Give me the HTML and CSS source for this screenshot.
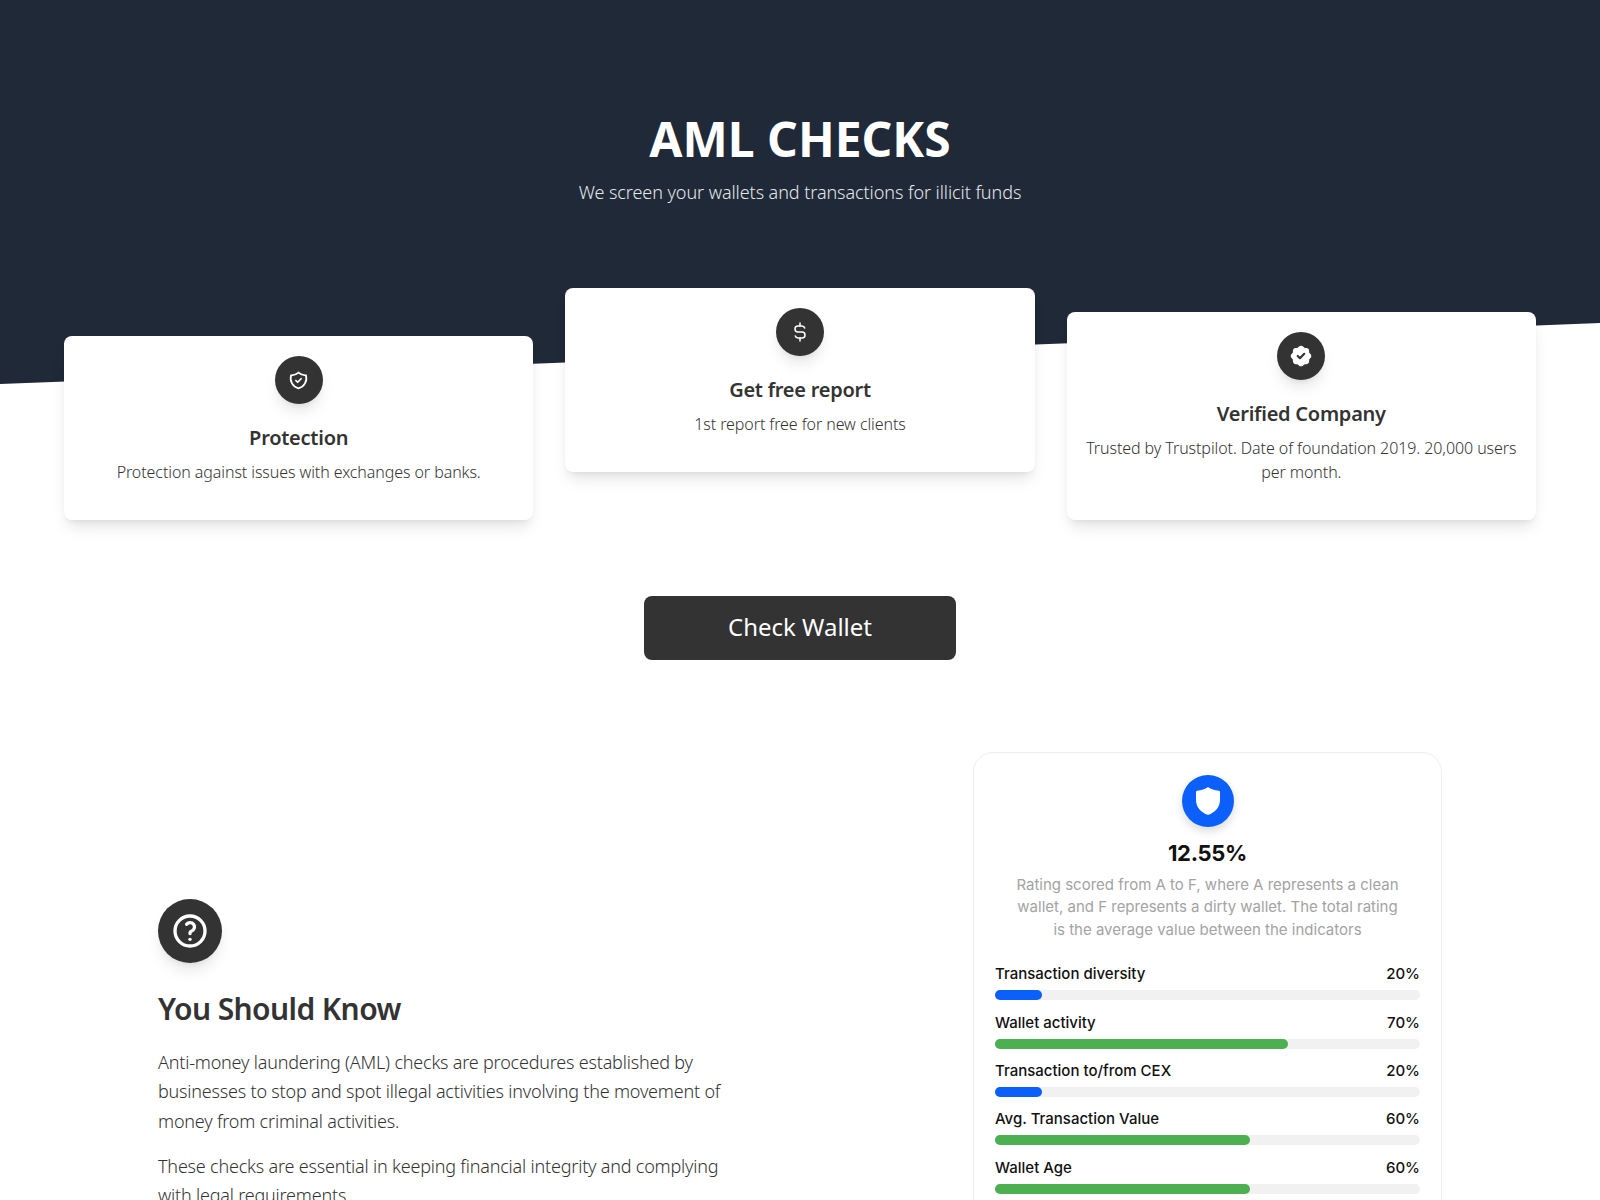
FILE: index.html
```html
<!DOCTYPE html>
<html lang="en">
<head>
    <meta charset="UTF-8">
    <title>AML Checks</title>
    <link rel="stylesheet" href="styles.css">
</head>
<body>
    <section class="hero">
        <h1>AML CHECKS</h1>
        <p class="subtitle">We screen your wallets and transactions for illicit funds</p>
        <div class="features">
            <div class="card low">
                <div class="icon-circle">
                    <svg width="21" height="21" viewBox="0 0 24 24" fill="none" stroke="#fff" stroke-width="2" stroke-linecap="round" stroke-linejoin="round"><path d="M9 12l2 2l4 -4"/><path d="M12 3a12 12 0 0 0 8.500 3a12 12 0 0 1 -8.500 15a12 12 0 0 1 -8.500 -15a12 12 0 0 0 8.500 -3"/></svg>
                </div>
                <h3>Protection</h3>
                <p>Protection against issues with exchanges or banks.</p>
            </div>
            <div class="card">
                <div class="icon-circle">
                    <svg width="24" height="24" viewBox="0 0 24 24" fill="none" stroke="#fff" stroke-width="1.5" stroke-linecap="round" stroke-linejoin="round"><path d="M16.700 8a3 3 0 0 0 -2.700 -2h-4a3 3 0 0 0 0 6h4a3 3 0 0 1 0 6h-4a3 3 0 0 1 -2.700 -2"/><path d="M12 3v3m0 12v3"/></svg>
                </div>
                <h3>Get free report</h3>
                <p>1st report free for new clients</p>
            </div>
            <div class="card mid">
                <div class="icon-circle">
                    <svg width="26" height="26" viewBox="0 0 24 24" fill="#fff" stroke="#fff" stroke-width="1" stroke-linecap="round" stroke-linejoin="round"><path d="M5 7.200a2.200 2.200 0 0 1 2.200 -2.200h1a2.200 2.200 0 0 0 1.550 -.64l.7 -.7a2.200 2.200 0 0 1 3.120 0l.7 .7c.412 .41 .97 .64 1.550 .64h1a2.200 2.200 0 0 1 2.200 2.200v1c0 .58 .23 1.138 .64 1.550l.7 .7a2.200 2.200 0 0 1 0 3.120l-.7 .7a2.200 2.200 0 0 0 -.64 1.550v1a2.200 2.200 0 0 1 -2.200 2.200h-1a2.200 2.200 0 0 0 -1.550 .64l-.7 .7a2.200 2.200 0 0 1 -3.120 0l-.7 -.7a2.200 2.200 0 0 0 -1.550 -.64h-1a2.200 2.200 0 0 1 -2.200 -2.200v-1a2.200 2.200 0 0 0 -.64 -1.550l-.7 -.7a2.200 2.200 0 0 1 0 -3.120l.7 -.7a2.200 2.200 0 0 0 .64 -1.550v-1"/><path d="M9 12l2 2l4 -4" fill="none" stroke="#333" stroke-width="2"/></svg>
                </div>
                <h3>Verified Company</h3>
                <p>Trusted by Trustpilot. Date of foundation 2019. 20,000 users per month.</p>
            </div>
        </div>
    </section>

    <div class="action">
        <button class="check-btn">Check Wallet</button>
    </div>

    <section class="know">
        <div class="know-text">
            <div class="icon-circle big">
                <svg width="40" height="40" viewBox="0 0 24 24" fill="none" stroke="#fff" stroke-width="2" stroke-linecap="round" stroke-linejoin="round"><circle cx="12" cy="12" r="9"/><path d="M12 17v.01"/><path d="M12 13.500a1.500 1.500 0 0 1 1 -1.500a2.600 2.600 0 1 0 -3 -4"/></svg>
            </div>
            <h2>You Should Know</h2>
            <p>Anti-money laundering (AML) checks are procedures established by businesses to stop and spot illegal activities involving the movement of money from criminal activities.</p>
            <p>These checks are essential in keeping financial integrity and complying with legal requirements.</p>
        </div>
        <div class="rating">
            <div class="rating-badge">
                <svg width="26" height="30" viewBox="0 0 26 30"><path d="M13 1c3 2.200 6.500 3.300 11 3.800.6.100 1 .6 1 1.200v8c0 7-4.500 12-11.500 14.800-.3.100-.7.100-1 0C5.500 26 1 21 1 14V6c0-.6.400-1.100 1-1.200C6.500 4.300 10 3.200 13 1z" fill="#fff"/></svg>
            </div>
            <div class="rating-value">12.55%</div>
            <p class="rating-note">Rating scored from A to F, where A represents a clean wallet, and F represents a dirty wallet. The total rating is the average value between the indicators</p>
            <div class="meter">
                <div class="meter-head"><span>Transaction diversity</span><span>20%</span></div>
                <div class="track"><div class="fill blue" style="width: 11%"></div></div>
            </div>
            <div class="meter">
                <div class="meter-head"><span>Wallet activity</span><span>70%</span></div>
                <div class="track"><div class="fill green" style="width: 69%"></div></div>
            </div>
            <div class="meter">
                <div class="meter-head"><span>Transaction to/from CEX</span><span>20%</span></div>
                <div class="track"><div class="fill blue" style="width: 11%"></div></div>
            </div>
            <div class="meter">
                <div class="meter-head"><span>Avg. Transaction Value</span><span>60%</span></div>
                <div class="track"><div class="fill green" style="width: 60%"></div></div>
            </div>
            <div class="meter">
                <div class="meter-head"><span>Wallet Age</span><span>60%</span></div>
                <div class="track"><div class="fill green" style="width: 60%"></div></div>
            </div>
        </div>
    </section>
</body>
</html>
```
FILE: styles.css
```css
* {
    box-sizing: border-box;
}
html, body {
    height: 1200px;
    overflow: hidden;
}
body {
    margin: 0;
    background: #fff;
    color: #333;
    font-family: "Noto Sans", sans-serif;
}

/* hero */
.hero {
    position: relative;
    padding: 109px 64px 0;
    text-align: center;
}
.hero::before {
    content: "";
    position: absolute;
    top: 0;
    left: 0;
    right: 0;
    height: 384px;
    background: #1f2937;
    clip-path: polygon(0 0, 100% 0, 100% 323px, 0 100%);
}
.hero h1 {
    position: relative;
    margin: 0;
    color: #fff;
    font-size: 48px;
    font-weight: 700;
    line-height: 60px;
}
.subtitle {
    position: relative;
    margin: 9px 0 0;
    color: #e5e7eb;
    font-size: 18px;
    font-weight: 300;
    line-height: 28px;
    letter-spacing: -.07px;
}
.features {
    position: relative;
    display: flex;
    align-items: flex-start;
    gap: 32px;
    margin-top: 82px;
}
.card {
    flex: 1 1 0;
    padding: 20px 16px 36px;
    background: #fff;
    border-radius: 8px;
    box-shadow: 0 10px 15px -3px rgba(0,0,0,.1), 0 4px 6px -4px rgba(0,0,0,.1);
}
.card.low {
    margin-top: 48px;
}
.card.mid {
    margin-top: 24px;
}
.card h3 {
    margin: 20px 0 0;
    font-size: 20px;
    font-weight: 600;
    line-height: 28px;
    letter-spacing: -.25px;
}
.card p {
    margin: 8px 0 0;
    font-size: 16px;
    font-weight: 300;
    line-height: 24px;
    letter-spacing: -.08px;
}
.icon-circle {
    display: flex;
    align-items: center;
    justify-content: center;
    width: 48px;
    height: 48px;
    margin: 0 auto;
    background: #333;
    border-radius: 50%;
    box-shadow: 0 10px 15px -3px rgba(0,0,0,.1), 0 4px 6px -4px rgba(0,0,0,.1);
}
.icon-circle.big {
    width: 64px;
    height: 64px;
    margin: 0;
}

/* button */
.action {
    display: flex;
    justify-content: center;
    margin-top: 76px;
}
.check-btn {
    width: 312px;
    height: 64px;
    padding: 0 0 3px;
    border: 0;
    border-radius: 8px;
    background: #333;
    color: #fff;
    font-family: inherit;
    font-size: 24px;
    font-weight: 400;
}

/* you should know */
.know {
    display: grid;
    grid-template-columns: 1fr 469px;
    margin-top: 92px;
    padding: 0 158px;
}
.know-text {
    width: 570px;
    padding-top: 147px;
}
.know-text h2 {
    margin: 26px 0 19px;
    font-size: 30px;
    font-weight: 600;
    line-height: 40px;
    letter-spacing: -.6px;
}
.know-text p {
    margin: 16px 0 0;
    font-size: 18px;
    font-weight: 300;
    line-height: 29.25px;
    letter-spacing: -.2px;
}

/* rating card, looks like an inserted picture */
.rating {
    height: 600px;
    padding: 22px 21px 0;
    border: 1px solid #eee;
    border-radius: 20px;
    font-family: Inter, sans-serif;
    color: #111;
    text-align: center;
}
.rating-badge {
    display: flex;
    align-items: center;
    justify-content: center;
    width: 52px;
    height: 52px;
    margin: 0 auto;
    background: #0b5ffa;
    border-radius: 50%;
    box-shadow: 0 4px 10px rgba(0,0,0,.15);
}
.rating-value {
    margin-top: 12px;
    font-size: 22px;
    font-weight: 700;
    line-height: 28px;
    letter-spacing: -.3px;
}
.rating-note {
    margin: 7px 0 20px;
    padding: 0 18px;
    color: #a3a3a3;
    font-size: 15px;
    line-height: 22.4px;
}
.meter {
    height: 48.4px;
    padding-top: 1px;
}
.meter-head {
    display: flex;
    justify-content: space-between;
    font-size: 15px;
    font-weight: 500;
    line-height: 24px;
}
.track {
    height: 10px;
    margin-top: 4px;
    background: #f1f1f1;
    border-radius: 5px;
}
.fill {
    height: 100%;
    border-radius: 5px;
}
.blue {
    background: #0b5ffa;
}
.green {
    background: #4caf50;
}
```
